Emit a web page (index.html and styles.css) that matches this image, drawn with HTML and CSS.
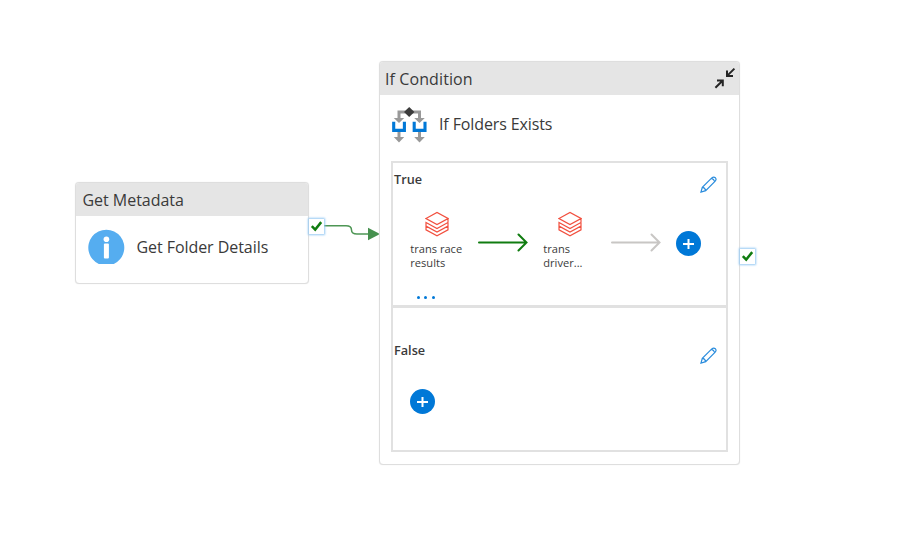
FILE: index.html
```html
<!DOCTYPE html>
<html lang="en">
<head>
<meta charset="utf-8">
<title>Pipeline canvas</title>
<link rel="stylesheet" href="styles.css">
</head>
<body>
<svg class="symbols" width="0" height="0">
  <symbol id="pencil" viewBox="0 0 17 17">
    <path d="M1 16 L2.3 11.3 L11.8 1.9 Q13.7 .3 15.4 1.8 Q16.8 3.4 15.2 5.2 L5.7 14.6 Z M2.3 11.3 Q5 11.5 5.7 14.6 M11.4 2.4 Q13.9 3.1 14.7 5.6" fill="none" stroke="#2b8ddd" stroke-width="1.2"/>
  </symbol>
  <symbol id="layers" viewBox="0 0 24 26">
    <path d="M1 7.5 L12 1.5 L23 7.5 L12 13.5 Z M23 8 V11.5 L12 17.5 L1 11.5 V15.1 L12 21.1 L23 15.1 V11.5 M1 15.1 V18.8 L12 24.8 L23 18.8 V15.3" fill="none" stroke="#f2503f" stroke-width="1.2"/>
  </symbol>
  <symbol id="arrow" viewBox="0 0 51 19">
    <path d="M1 9.5 H48.5 M40.5 1.5 L48.5 9.5 L40.5 17.5" fill="none" stroke="currentColor" stroke-width="2" stroke-linecap="round"/>
  </symbol>
  <symbol id="plus" viewBox="0 0 26 26">
    <circle cx="12.5" cy="12.5" r="12.5" fill="#0078d7"/>
    <path d="M7 13 H18 M12.5 8 V18" stroke="#fff" stroke-width="2"/>
  </symbol>
  <symbol id="check" viewBox="0 0 15 15">
    <path d="M2.8 7.1 L6.2 10.6 L12.2 3.1" fill="none" stroke="#107c10" stroke-width="2.5"/>
  </symbol>
</svg>
<main class="canvas">
  <section class="node metadata">
    <header class="node-header">Get Metadata</header>
    <div class="node-body">
      <svg class="info" width="37" height="36" viewBox="0 0 37 36">
        <path d="M10.8 35 A18 18 0 1 1 25.8 35 Z" fill="#55adf0"/>
        <circle cx="18.4" cy="10.2" r="2.8" fill="#fff"/>
        <rect x="15.9" y="14.4" width="5" height="15" rx="1" fill="#fff"/>
      </svg>
      <span class="name">Get Folder Details</span>
    </div>
  </section>

  <svg class="connector" width="60" height="24" viewBox="0 0 60 24">
    <path d="M0 5.8 H22 Q27.5 5.8 27.5 10 Q27.5 14 33 14 H46" fill="none" stroke="#4e9655" stroke-width="1.5"/>
    <path d="M44 7.7 L56 14 L44 20.3 Z" fill="#46904e"/>
  </svg>

  <section class="node condition">
    <header class="node-header">
      <span>If Condition</span>
      <svg class="collapse" width="22" height="22" viewBox="0 0 22 22">
        <path d="M20.4 1.6 L13.6 8.4 M13 3.4 V9 H19 M1.4 20.8 L8 14.2 M3 13.4 H8.8 V19.2" fill="none" stroke="#252525" stroke-width="2"/>
      </svg>
    </header>
    <div class="node-body">
      <svg width="36" height="37" viewBox="0 -1 36 37">
        <path d="M8 12 V5 H28.5 V12" fill="none" stroke="#999" stroke-width="3"/>
        <path d="M2.8 11 H13.2 L8 16 Z M23.2 11 H33.8 L28.5 16 Z M2.8 30 H13.2 L8 35.4 Z M23.2 30 H33.8 L28.5 35.4 Z" fill="#999"/>
        <path d="M8 25 V31 M28.5 25 V31" stroke="#999" stroke-width="3"/>
        <path d="M2.7 14.7 V23.4 H13.4 V14.7 M23.2 14.7 V23.4 H34 V14.7" fill="none" stroke="#0078d7" stroke-width="3.1"/>
        <path d="M13 5 L18.2 0 L23.4 5 L18.2 10 Z" fill="#3c3c3c"/>
      </svg>
      <span class="name">If Folders Exists</span>
    </div>
    <div class="branches">
      <div class="branch">
        <div class="branch-head"><b>True</b><svg class="pencil" width="17" height="17"><use href="#pencil"/></svg></div>
        <div class="flow">
          <div class="activity"><svg width="24" height="26"><use href="#layers"/></svg><p>trans race<br>results</p></div>
          <svg class="arrow success" width="51" height="19"><use href="#arrow"/></svg>
          <div class="activity"><svg width="24" height="26"><use href="#layers"/></svg><p>trans<br>driver...</p></div>
          <svg class="arrow" width="51" height="19"><use href="#arrow"/></svg>
          <svg class="add" width="26" height="26"><use href="#plus"/></svg>
        </div>
        <div class="more"><i></i><i></i><i></i></div>
      </div>
      <div class="branch negative">
        <div class="branch-head"><b>False</b><svg class="pencil" width="17" height="17"><use href="#pencil"/></svg></div>
        <svg class="add" width="26" height="26"><use href="#plus"/></svg>
      </div>
    </div>
  </section>
  <svg class="port port-a" width="15" height="15"><use href="#check"/></svg>
  <svg class="port port-b" width="15" height="15"><use href="#check"/></svg>
</main>
</body>
</html>
```
FILE: styles.css
```css
* { box-sizing: border-box; }
body { margin: 0; background: #fff; font-family: "Open Sans", "Noto Sans", sans-serif; color: #3a3a3a; }
svg { display: block; flex: none; }
.symbols { position: absolute; }
.canvas { position: relative; width: 902px; height: 539px; overflow: hidden; background: #fff; }
.node { position: absolute; background: #fff; border: 1px solid #dedede; border-radius: 4px; box-shadow: 0 0 1px #ddd; }
.metadata { left: 75px; top: 182px; width: 233.5px; height: 101.5px; }
.condition { left: 378.5px; top: 61px; width: 361px; height: 404px; }
.node-header { display: flex; justify-content: space-between; height: 33px; padding: 0 3px 0 6.5px; background: #e5e5e5; border-radius: 3px 3px 0 0; font-size: 16px; line-height: 35px; letter-spacing: -.03px; }
.condition .node-header { padding-left: 5.5px; letter-spacing: .1px; }
.collapse { margin-top: 5px; }
.node-body { display: flex; align-items: center; gap: 12px; font-size: 16px; }
.metadata .node-body { height: 62px; padding-left: 12px; gap: 11.4px; letter-spacing: -.05px; }
.condition .node-body { height: 59px; padding-left: 11.5px; letter-spacing: -.12px; }
.name { white-space: nowrap; }
.condition .name { margin-top: -1px; }
.branches { width: 337px; margin: 7px 0 0 11px; }
.branch { height: 146px; border: 2px solid #e1e1e1; }
.branch.negative { height: 146px; margin-top: -1px; }
.branch-head { display: flex; justify-content: space-between; height: 35px; padding: 8px 9px 0 1.5px; font-size: 12.7px; line-height: 17px; }
.branch-head b { font-weight: 600; }
.pencil { margin-top: 5px; }
.flow { display: flex; align-items: flex-start; padding: 13px 0 0 17px; height: 94px; }
.activity { width: 68px; font-size: 11.1px; line-height: 14px; }
.activity svg { margin-left: 15px; }
.activity p { margin: 5px 0 0 .8px; }
.arrow { margin: 22px 14px 0 0; color: #c8c6c4; }
.arrow.success { color: #107c10; }
.flow .add { margin-top: 20px; }
.more { display: flex; gap: 4.5px; padding: 3.5px 0 0 24px; }
.more i { width: 3px; height: 3px; border-radius: 50%; background: #0078d7; }
.negative .branch-head { height: 68px; padding-top: 34px; }
.negative .add { margin: 13px 0 0 17px; }
.connector { position: absolute; left: 324px; top: 220px; }
.port { position: absolute; background: #fff; box-shadow: 0 0 2px 1px #96c9f3; }
.port-a { left: 309px; top: 219px; }
.port-b { left: 740px; top: 249px; }
```
